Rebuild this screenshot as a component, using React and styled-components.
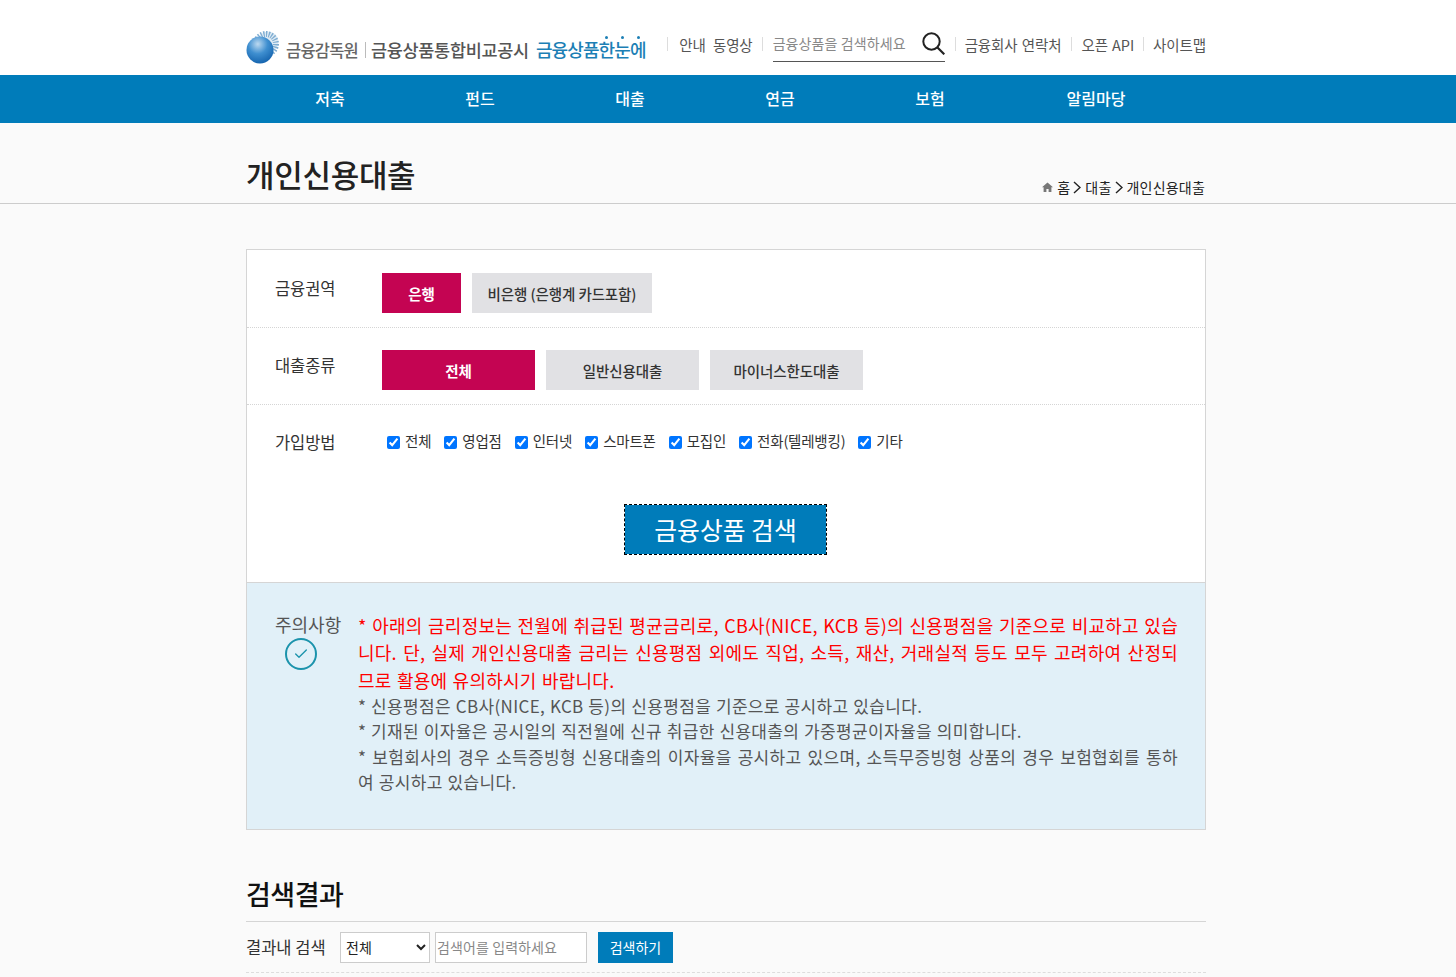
import React from "react";
import styled, { createGlobalStyle } from "styled-components";
import { Check } from "lucide-react";

const FONT = `"Noto Sans CJK KR", "Noto Sans", sans-serif`;
const BLUE = "#007cba";
const RED = "#c40452";

const GlobalStyle = createGlobalStyle`
  html, body { margin: 0; padding: 0; height: 977px; overflow: hidden; background: #fafafa; }
  body { font-family: ${FONT}; color: #333; }
  * { box-sizing: border-box; }
`;

const Wrap = styled.div`
  width: 960px;
  margin-left: 246px;
`;

const Top = styled.header`
  height: 75px;
  background: #fff;
`;

const TopInner = styled(Wrap)`
  height: 75px;
  display: flex;
  align-items: flex-start;
  justify-content: space-between;
`;

const Logo = styled.a`
  display: flex;
  align-items: center;
  height: 34px;
  margin-top: 29px;
`;

const FssName = styled.span`
  font-size: 16.5px;
  font-weight: 500;
  letter-spacing: -0.8px;
  color: #666;
  margin-left: 7px;
  margin-top: 7px;
`;

const LogoBar = styled.i`
  width: 1px;
  height: 16px;
  background: #bbb;
  margin: 7px 5px 0 7px;
`;

const SiteName = styled.span`
  font-size: 17.5px;
  font-weight: 500;
  letter-spacing: -0.3px;
  color: #555;
  margin-top: 6px;
`;

const Catch = styled.span`
  font-size: 18px;
  font-weight: 500;
  letter-spacing: -0.9px;
  color: #1c7fb5;
  margin-left: 7px;
  margin-top: 6px;
`;

const Dotted = styled.span`
  position: relative;
  &::before {
    content: "";
    position: absolute;
    left: 50%;
    top: 0;
    width: 3px;
    height: 3px;
    margin-left: -1px;
    border-radius: 50%;
    background: #1c7fb5;
  }
`;

const Util = styled.nav`
  display: flex;
  align-items: center;
  height: 34px;
  margin-top: 28px;
`;

const UtilLink = styled.a`
  padding-bottom: 2px;
  font-size: 14.5px;
  letter-spacing: -0.1px;
  word-spacing: ${p => p.$word || 0}px;
  color: #555;
  white-space: nowrap;
`;

const UtilSep = styled.i`
  width: 1px;
  height: 14px;
  margin: 0 ${p => p.$right || 9}px 2px ${p => p.$left || 9}px;
  background: #ddd;
`;

const SearchBox = styled.div`
  display: flex;
  align-items: center;
  justify-content: space-between;
  width: 172px;
  height: 34px;
  padding-bottom: 3px;
  border-bottom: 1px solid #555;
  font-size: 14px;
  letter-spacing: 0.1px;
  color: #888;
  svg { display: block; }
`;

const Nav = styled.nav`
  height: 48px;
  background: ${BLUE};
`;

const NavInner = styled(Wrap)`
  display: grid;
  grid-template-columns: repeat(5, 150px) 182px;
  padding-left: 9px;
`;

const NavItem = styled.a`
  height: 48px;
  line-height: 46px;
  text-align: center;
  color: #fff;
  font-size: 16px;
  font-weight: 500;
`;

const TitleBar = styled.div`
  height: 81px;
  border-bottom: 1px solid #ccc;
`;

const TitleInner = styled(Wrap)`
  height: 80px;
  display: flex;
  align-items: flex-end;
  justify-content: space-between;
`;

const PageTitle = styled.h1`
  margin: 0 0 7px;
  font-size: 31px;
  line-height: 44px;
  font-weight: 500;
  letter-spacing: -0.3px;
  color: #222;
`;

const Crumbs = styled.div`
  display: flex;
  align-items: center;
  height: 20px;
  margin: 0 1px 6px 0;
  font-size: 14px;
  letter-spacing: 0.2px;
  color: #222;
  svg { display: block; }
`;

const HomeGlyph = styled.svg`
  margin-right: 4px;
`;

const Arrow = styled.svg`
  margin: 0 4px 0 3px;
`;

const Card = styled(Wrap)`
  margin-top: 45px;
  border: 1px solid #d5d5d5;
  background: #fff;
`;

const Row = styled.div`
  display: flex;
  align-items: flex-start;
  height: ${p => p.$h}px;
  padding-top: ${p => p.$top}px;
  border-bottom: ${p => (p.$last ? "0" : "1px dotted #d5d5d5")};
`;

const RowLabel = styled.div`
  width: 135px;
  margin-top: 3px;
  padding-left: 28px;
  font-size: 16.5px;
  line-height: 24px;
  color: #333;
  letter-spacing: -0.1px;
`;

const Chips = styled.div`
  display: flex;
  gap: 11px;
`;

const Chip = styled.button`
  height: 40px;
  width: ${p => p.$w}px;
  border: 0;
  padding: 0;
  font-family: ${FONT};
  font-size: 14.5px;
  letter-spacing: -0.1px;
  font-weight: ${p => (p.$on ? 700 : 500)};
  color: ${p => (p.$on ? "#fff" : "#333")};
  background: ${p => (p.$on ? RED : "#e1e1e4")};
`;

const Checks = styled.div`
  display: flex;
  align-items: center;
  height: 24px;
  margin: 1px 0 0 5px;
  gap: 13px;
`;

const CheckItem = styled.label`
  display: flex;
  align-items: center;
  font-size: 14.5px;
  letter-spacing: -0.2px;
  color: #333;
  white-space: nowrap;
  input {
    width: 13px;
    height: 13px;
    margin: 4px 5px 0 0;
    accent-color: #0075ff;
  }
`;

const SubmitRow = styled.div`
  display: flex;
  justify-content: center;
  padding: 0 0 27px 0;
  margin-right: 1px;
`;

const Submit = styled.button`
  width: 203px;
  height: 51px;
  border: 1px dashed #000;
  padding: 0 0 2px;
  font-family: ${FONT};
  font-size: 24.8px;
  letter-spacing: 0;
  color: #fff;
  background: ${BLUE};
  background-clip: padding-box;
  outline: 0;
`;

const Notice = styled.section`
  display: flex;
  height: 247px;
  padding: 28px 27px 0 28px;
  background: #e1f0f8;
  border-top: 1px solid #d5d5d5;
`;

const NoticeHead = styled.div`
  flex: 0 0 83px;
  font-size: 18px;
  line-height: 27px;
  color: #555;
`;

const Badge = styled.div`
  display: flex;
  align-items: center;
  justify-content: center;
  width: 32px;
  height: 32px;
  margin-left: 10px;
  border: 2px solid #1b93ac;
  border-radius: 50%;
  color: #1b93ac;
`;

const NoticeBody = styled.div`
  width: 820px;
`;

const Warn = styled.p`
  margin: 0 0 -1.5px;
  padding-top: 0.5px;
  color: #f00;
  font-size: 18px;
  line-height: 27.5px;
  letter-spacing: 0.25px;
  word-spacing: 1px;
  word-break: break-all;
  text-align: justify;
`;

const Fine = styled.p`
  margin: 0;
  color: #555;
  font-size: 17px;
  line-height: 25.5px;
  letter-spacing: 0.35px;
  word-spacing: 0.6px;
  word-break: break-all;
  text-align: justify;
`;

const Results = styled(Wrap)`
  margin-top: 43px;
`;

const ResultTitle = styled.h2`
  margin: 0;
  height: 49px;
  font-size: 27px;
  line-height: 42px;
  font-weight: 500;
  color: #111;
  letter-spacing: -0.5px;
  border-bottom: 1px solid #d5d5d5;
`;

const Filter = styled.div`
  display: flex;
  align-items: center;
  height: 51px;
  border-bottom: 1px dashed #ddd;
  font-size: 16.5px;
  color: #333;
`;

const FilterLabel = styled.span`
  width: 94px;
`;

const Select = styled.select`
  width: 90px;
  height: 31px;
  margin-right: 5px;
  padding-left: 1px;
  background: #fff;
  border: 1px solid #ccc;
  border-radius: 0;
  font-family: ${FONT};
  font-size: 14px;
  color: #222;
  outline: 0;
`;

const TextInput = styled.input`
  width: 152px;
  height: 31px;
  padding: 0 1px;
  border: 1px solid #ccc;
  background: #fff;
  font-family: ${FONT};
  font-size: 14px;
  letter-spacing: 0.1px;
  outline: 0;
  &::placeholder { color: #888; }
`;

const FilterBtn = styled.button`
  width: 75px;
  height: 31px;
  margin-left: 11px;
  border: 0;
  padding: 0;
  font-family: ${FONT};
  font-size: 14px;
  color: #fff;
  background: ${BLUE};
`;

const FssMark = () => (
  <svg width="33" height="35" viewBox="0 0 33 35">
    <defs>
      <radialGradient id="ball" cx="0.42" cy="0.28" r="0.8">
        <stop offset="0" stopColor="#bcd9f0" />
        <stop offset="0.45" stopColor="#3f8fd0" />
        <stop offset="1" stopColor="#0d5ca8" />
      </radialGradient>
    </defs>
    <circle cx="22" cy="13" r="10.5" fill="#dfebf4" />
    <circle cx="20" cy="15" r="10" fill="none" stroke="#7fadd2" strokeWidth="6" strokeDasharray="1.3 1.3" />
    <circle cx="14" cy="21" r="13.5" fill="url(#ball)" />
  </svg>
);

const SearchIcon = () => (
  <svg width="23" height="23" viewBox="0 0 23 23" fill="none" stroke="#222">
    <circle cx="9.5" cy="9.5" r="8.2" strokeWidth="2" />
    <path d="M15.5 15.5 22.3 22.3" strokeWidth="2.2" />
  </svg>
);

const HomeIcon = () => (
  <HomeGlyph width="11" height="10" viewBox="0 0 11 10" fill="#777">
    <path d="M5.5 0.5 0 5.2h1.6V10h2.8V7h2.2v3h2.8V5.2H11z" />
  </HomeGlyph>
);

const CrumbArrow = () => (
  <Arrow width="8" height="13" viewBox="0 0 8 13" fill="none" stroke="#222" strokeWidth="1.4">
    <path d="M1 1 7 6.5 1 12" />
  </Arrow>
);

const methods = ["전체", "영업점", "인터넷", "스마트폰", "모집인", "전화(텔레뱅킹)", "기타"];

export default function App() {
  return (
    <>
      <GlobalStyle />
      <Top>
        <TopInner>
          <Logo>
            <FssMark />
            <FssName>금융감독원</FssName>
            <LogoBar />
            <SiteName>금융상품통합비교공시</SiteName>
            <Catch>
              금융상품<Dotted>한</Dotted><Dotted>눈</Dotted><Dotted>에</Dotted>
            </Catch>
          </Logo>
          <Util>
            <UtilSep $right={11} />
            <UtilLink $word={4}>안내 동영상</UtilLink>
            <UtilSep $right={10} />
            <SearchBox>
              금융상품을 검색하세요
              <SearchIcon />
            </SearchBox>
            <UtilSep $left={10} />
            <UtilLink $word={1}>금융회사 연락처</UtilLink>
            <UtilSep $left={10} />
            <UtilLink $word={1}>오픈 API</UtilLink>
            <UtilSep />
            <UtilLink>사이트맵</UtilLink>
          </Util>
        </TopInner>
      </Top>
      <Nav>
        <NavInner>
          {["저축", "펀드", "대출", "연금", "보험", "알림마당"].map(m => (
            <NavItem key={m}>{m}</NavItem>
          ))}
        </NavInner>
      </Nav>
      <TitleBar>
        <TitleInner>
          <PageTitle>개인신용대출</PageTitle>
          <Crumbs>
            <HomeIcon />
            홈<CrumbArrow />대출<CrumbArrow />개인신용대출
          </Crumbs>
        </TitleInner>
      </TitleBar>
      <Card>
        <Row $h={78} $top={23}>
          <RowLabel>금융권역</RowLabel>
          <Chips>
            <Chip $on $w={79}>은행</Chip>
            <Chip $w={180}>비은행 (은행계 카드포함)</Chip>
          </Chips>
        </Row>
        <Row $h={77} $top={22}>
          <RowLabel>대출종류</RowLabel>
          <Chips>
            <Chip $on $w={153}>전체</Chip>
            <Chip $w={153}>일반신용대출</Chip>
            <Chip $w={153}>마이너스한도대출</Chip>
          </Chips>
        </Row>
        <Row $h={99} $top={22} $last>
          <RowLabel>가입방법</RowLabel>
          <Checks>
            {methods.map(m => (
              <CheckItem key={m}>
                <input type="checkbox" defaultChecked />
                {m}
              </CheckItem>
            ))}
          </Checks>
        </Row>
        <SubmitRow>
          <Submit>금융상품 검색</Submit>
        </SubmitRow>
        <Notice>
          <NoticeHead>
            주의사항
            <Badge>
              <Check size={16} strokeWidth={2} />
            </Badge>
          </NoticeHead>
          <NoticeBody>
            <Warn>* 아래의 금리정보는 전월에 취급된 평균금리로, CB사(NICE, KCB 등)의 신용평점을 기준으로 비교하고 있습니다. 단, 실제 개인신용대출 금리는 신용평점 외에도 직업, 소득, 재산, 거래실적 등도 모두 고려하여 산정되므로 활용에 유의하시기 바랍니다.</Warn>
            <Fine>* 신용평점은 CB사(NICE, KCB 등)의 신용평점을 기준으로 공시하고 있습니다.</Fine>
            <Fine>* 기재된 이자율은 공시일의 직전월에 신규 취급한 신용대출의 가중평균이자율을 의미합니다.</Fine>
            <Fine>* 보험회사의 경우 소득증빙형 신용대출의 이자율을 공시하고 있으며, 소득무증빙형 상품의 경우 보험협회를 통하여 공시하고 있습니다.</Fine>
          </NoticeBody>
        </Notice>
      </Card>
      <Results>
        <ResultTitle>검색결과</ResultTitle>
        <Filter>
          <FilterLabel>결과내 검색</FilterLabel>
          <Select defaultValue="전체">
            <option>전체</option>
          </Select>
          <TextInput placeholder="검색어를 입력하세요" />
          <FilterBtn>검색하기</FilterBtn>
        </Filter>
      </Results>
    </>
  );
}
